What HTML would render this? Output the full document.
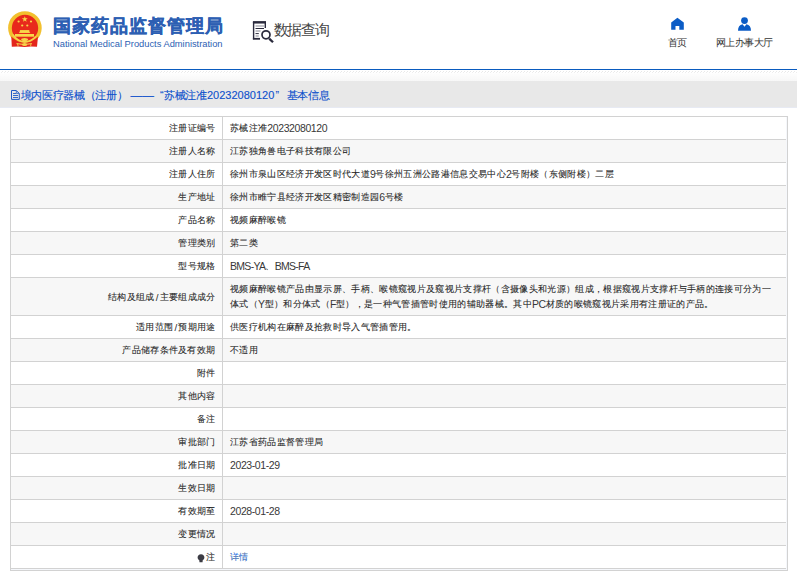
<!DOCTYPE html>
<html><head><meta charset="utf-8">
<style>
*{margin:0;padding:0;box-sizing:border-box}
html,body{width:797px;height:576px;overflow:hidden;background:#fff;font-family:"Liberation Sans",sans-serif;}
.abs{position:absolute}
.t{position:absolute;white-space:nowrap}
#title{left:53px;top:13px;font-size:18px;font-weight:bold;color:#2d5fb3;line-height:26px;-webkit-text-stroke:0.35px #2d5fb3}
#eng{left:53px;top:38px;font-size:9.33px;color:#2d5fb3;line-height:12px}
#sq{left:273.6px;top:19px;font-size:15px;color:#444;line-height:22px;letter-spacing:-1.2px}
.nav{top:37px;font-size:10px;color:#333;line-height:12px}
.nav .c{letter-spacing:-0.6px}
#bline{position:absolute;left:0;top:69px;width:797px;height:1px;background:#0a5bbf}
#hatch{position:absolute;left:0;top:71px;width:797px;height:1px;background:repeating-linear-gradient(90deg,#fff 0 2px,#e8e8e8 2px 3px)}
#hatch2{position:absolute;left:0;top:72px;width:797px;height:1px;background:repeating-linear-gradient(90deg,#fff 0 1px,#eeeeee 1px 2px,#fff 2px 3px)}
#grad{position:absolute;left:0;top:73px;width:797px;height:8px;background:linear-gradient(#fefefe,#f7f7f7)}
#band{position:absolute;left:0;top:81px;width:797px;height:26px;background:#e8e8e8}
#band2{position:absolute;left:0;top:107px;width:797px;height:1px;background:#e7eaf3}
.bt{top:87px;font-size:10.6px;color:#0d50cc;-webkit-text-stroke:0.12px #0d50cc;line-height:16px}
.bt .c{letter-spacing:-0.3px}
#box{position:absolute;left:10px;top:116px;width:778px;height:455px;border:1px solid #d2d2d2;background:#f5f7fb}
.r{position:absolute;left:11px;width:775px;background:#fff;border-bottom:1px solid #d2d2d2;font-size:9.77px;color:#262626}
.r.even{background:#f7f7f7}
.l{position:absolute;left:0;top:0;padding-top:1px;width:212px;padding-right:6.5px;text-align:right;white-space:nowrap;border-right:1px solid #d2d2d2;height:100%}
.v{position:absolute;left:212px;top:1px;padding-left:7px;white-space:nowrap}
.v.tall{line-height:15px !important;padding-top:3px}
.lnk{color:#2f80f0}
.c{letter-spacing:-0.67px}
.sl{margin:0 1px}
.r .c{font-size:9px;letter-spacing:0.33px;line-height:1px;vertical-align:1px;-webkit-text-stroke:0.08px #262626}
.r .a{font-size:10.5px;letter-spacing:-0.4px;line-height:1px;color:#383838}
</style></head><body>
  <svg class="abs" style="left:6px;top:9px" width="38" height="40" viewBox="6 9 38 40">
    <circle cx="24.9" cy="28" r="16.8" fill="#f2c02e"/>
    <circle cx="25" cy="28" r="13.2" fill="#e8291c"/>
    <path d="M11.3 36.5 Q24.6 49 38 36.5 L37 46.8 L31 46.5 L24.5 47 L18 46.5 L11.8 46.8Z" fill="#e3261c"/>
    <path d="M12.7 34.4 Q18 42 24.6 41.9 Q31 42 35.8 36.5" fill="none" stroke="#f6d34a" stroke-width="1.6"/>
    <ellipse cx="24.6" cy="39.5" rx="3.4" ry="1.5" fill="#f6d34a"/>
    <ellipse cx="24.6" cy="44.5" rx="2.6" ry="1.6" fill="#f6d34a"/>
    <path d="M16.5 43.6 Q24.6 45.5 31.9 43.6" fill="none" stroke="#f6d34a" stroke-width="1"/>
    <path d="M17.5 43.8 L18.2 46.3 M31 43.8 L30.6 46.3" stroke="#f6d34a" stroke-width="0.9"/>
    <path d="M24.8 16.2l0.75 2.1h2.2l-1.8 1.35 0.7 2.15-1.85-1.3-1.85 1.3 0.7-2.15-1.8-1.35h2.2z" fill="#f8d84a"/>
    <circle cx="18.6" cy="21.5" r="1.1" fill="#f8d84a"/>
    <circle cx="31" cy="21.5" r="1.1" fill="#f8d84a"/>
    <circle cx="22.2" cy="25.5" r="1.1" fill="#f8d84a"/>
    <circle cx="27.3" cy="25.5" r="1.1" fill="#f8d84a"/>
    <rect x="19.9" y="30.1" width="9.4" height="2.6" fill="#f8d84a"/>
    <rect x="19.1" y="31.8" width="11" height="1" fill="#f8d84a"/>
    <rect x="15" y="34" width="19" height="2.7" fill="#f8d84a"/>
  </svg>
  <div id="title" class="t"><span style="letter-spacing:1.05px">国家药品监督管理局</span></div>
  <div id="eng" class="t">National Medical Products Administration</div>
  <svg class="abs" style="left:248px;top:18px" width="30" height="28" viewBox="248 18 30 28">
    <path d="M253.6 39.2V22.8H265.3V28" fill="none" stroke="#2a2a3c" stroke-width="1.4"/>
    <path d="M252.9 22.1H266" stroke="#2a2a3c" stroke-width="2"/>
    <path d="M252.9 38.8H260" stroke="#2a2a3c" stroke-width="1.8"/>
    <path d="M255.5 26H264M255.5 31H260.5M255.5 36H258.8" stroke="#8a8a96" stroke-width="1.1"/>
    <path d="M255.5 28.5H264M255.5 33.6H258.8" stroke="#2a2a3c" stroke-width="1"/>
    <circle cx="266" cy="34.8" r="4" fill="#fff" stroke="#2a2a3c" stroke-width="1.7"/>
    <path d="M269.2 38.6L273 42.3" stroke="#2a2a3c" stroke-width="2.3"/>
  </svg>
  <div id="sq" class="t"><span>数据查询</span></div>
  <svg class="abs" style="left:664px;top:12px" width="28" height="22" viewBox="664 12 28 22"><path d="M677.4 17.8L683.8 22.5V29.8H679.3V25.9H675.5V29.8H671.2V22.5Z" fill="#0b5cc6"/></svg>
  <div class="t nav" style="left:668px"><span class="c">首页</span></div>
  <svg class="abs" style="left:730px;top:12px" width="28" height="22" viewBox="730 12 28 22"><circle cx="744.5" cy="20.6" r="3.4" fill="#0b5cc6"/><path d="M738 30.7Q738 25 742.6 24.2L744.5 26.8L746.4 24.2Q751 25 751 30.7Z" fill="#0b5cc6"/></svg>
  <div class="t nav" style="left:716px"><span class="c">网上办事大厅</span></div>
<div id="bline"></div>
<div id="hatch"></div><div id="hatch2"></div>
<div id="grad"></div>
<div id="band"></div>
<div id="band2"></div>
<svg class="abs" style="left:10px;top:89px" width="11" height="12" viewBox="10 89 11 12"><path d="M11.5 90.5H16.3L19.3 93.5V99.4H11.5Z" fill="none" stroke="#1f5bc4" stroke-width="1"/><path d="M16.3 90.8V93.4H19" fill="none" stroke="#1f5bc4" stroke-width="0.8"/><path d="M13 93.5H16M13 95.5H18M13 97.5H18" stroke="#1f5bc4" stroke-width="0.9"/></svg>
<div class="t bt" style="left:20.5px"><span class="c">境内医疗器械（注册）</span></div>
<div class="t bt" style="left:130.5px;font-size:11.7px">——</div>
<div class="t bt" style="left:160px">“</div>
<div class="t bt" style="left:164px"><span class="c">苏械注准</span></div>
<div class="t bt" style="left:207px;font-size:11px">20232080120</div>
<div class="t bt" style="left:275.5px">”</div>
<div class="t bt" style="left:286.5px"><span class="c">基本信息</span></div>
<div id="box"></div>
<div class="r" style="top:117px;height:23px"><div class="l" style="line-height:22px"><span class="c">注册证编号</span></div><div class="v" style="line-height:22px"><span class="c">苏械注准</span><span class="a">20232080120</span></div></div>
<div class="r even" style="top:140px;height:23px"><div class="l" style="line-height:22px"><span class="c">注册人名称</span></div><div class="v" style="line-height:22px"><span class="c">江苏独角兽电子科技有限公司</span></div></div>
<div class="r" style="top:163px;height:23px"><div class="l" style="line-height:22px"><span class="c">注册人住所</span></div><div class="v" style="line-height:22px"><span class="c">徐州市泉山区经济开发区时代大道</span><span class="a">9</span><span class="c">号徐州五洲公路港信息交易中心</span><span class="a">2</span><span class="c">号附楼（东侧附楼）二层</span></div></div>
<div class="r even" style="top:186px;height:23px"><div class="l" style="line-height:22px"><span class="c">生产地址</span></div><div class="v" style="line-height:22px"><span class="c">徐州市睢宁县经济开发区精密制造园</span><span class="a">6</span><span class="c">号楼</span></div></div>
<div class="r" style="top:209px;height:23px"><div class="l" style="line-height:22px"><span class="c">产品名称</span></div><div class="v" style="line-height:22px"><span class="c">视频麻醉喉镜</span></div></div>
<div class="r even" style="top:232px;height:23px"><div class="l" style="line-height:22px"><span class="c">管理类别</span></div><div class="v" style="line-height:22px"><span class="c">第二类</span></div></div>
<div class="r" style="top:255px;height:23px"><div class="l" style="line-height:22px"><span class="c">型号规格</span></div><div class="v" style="line-height:22px"><span class="a" style="letter-spacing:-0.7px">BMS-YA</span><span class="c">、</span><span class="a" style="letter-spacing:-0.7px">BMS-FA</span></div></div>
<div class="r even" style="top:278px;height:38px"><div class="l" style="line-height:37px"><span class="c">结构及组成</span><span class="sl">/</span><span class="c">主要组成成分</span></div><div class="v tall" style="line-height:37px"><span class="c">视频麻醉喉镜产品由显示屏、手柄、喉镜窥视片及窥视片支撑杆（含摄像头和光源）组成，根据窥视片支撑杆与手柄的连接可分为一</span><br><span class="c">体式（</span><span class="a">Y</span><span class="c">型）和分体式（</span><span class="a">F</span><span class="c">型），是一种气管插管时使用的辅助器械。其中</span><span class="a">PC</span><span class="c">材质的喉镜窥视片采用有注册证的产品。</span></div></div>
<div class="r" style="top:316px;height:23px"><div class="l" style="line-height:22px"><span class="c">适用范围</span><span class="sl">/</span><span class="c">预期用途</span></div><div class="v" style="line-height:22px"><span class="c">供医疗机构在麻醉及抢救时导入气管插管用。</span></div></div>
<div class="r even" style="top:339px;height:23px"><div class="l" style="line-height:22px"><span class="c">产品储存条件及有效期</span></div><div class="v" style="line-height:22px"><span class="c">不适用</span></div></div>
<div class="r" style="top:362px;height:23px"><div class="l" style="line-height:22px"><span class="c">附件</span></div><div class="v" style="line-height:22px"></div></div>
<div class="r even" style="top:385px;height:23px"><div class="l" style="line-height:22px"><span class="c">其他内容</span></div><div class="v" style="line-height:22px"></div></div>
<div class="r" style="top:408px;height:23px"><div class="l" style="line-height:22px"><span class="c">备注</span></div><div class="v" style="line-height:22px"></div></div>
<div class="r even" style="top:431px;height:23px"><div class="l" style="line-height:22px"><span class="c">审批部门</span></div><div class="v" style="line-height:22px"><span class="c">江苏省药品监督管理局</span></div></div>
<div class="r" style="top:454px;height:23px"><div class="l" style="line-height:22px"><span class="c">批准日期</span></div><div class="v" style="line-height:22px"><span class="a">2023-01-29</span></div></div>
<div class="r even" style="top:477px;height:23px"><div class="l" style="line-height:22px"><span class="c">生效日期</span></div><div class="v" style="line-height:22px"></div></div>
<div class="r" style="top:500px;height:23px"><div class="l" style="line-height:22px"><span class="c">有效期至</span></div><div class="v" style="line-height:22px"><span class="a">2028-01-28</span></div></div>
<div class="r even" style="top:523px;height:23px"><div class="l" style="line-height:22px"><span class="c">变更情况</span></div><div class="v" style="line-height:22px"></div></div>
<div class="r" style="top:546px;height:23px"><div class="l" style="line-height:22px"><svg width="8" height="9" viewBox="0 0 8 9" style="vertical-align:-2px;margin-right:1px"><path d="M4 0.3C6.1 0.3 7.4 1.7 7.4 3.5C7.4 5 6.3 5.8 5.6 6.6V8.2H2.4V6.6C1.7 5.8 0.6 5 0.6 3.5C0.6 1.7 1.9 0.3 4 0.3Z" fill="#3c3c44"/></svg><span class="c">注</span></div><div class="v" style="line-height:22px"><span class="lnk"><span class="c">详情</span></span></div></div>
</body></html>
